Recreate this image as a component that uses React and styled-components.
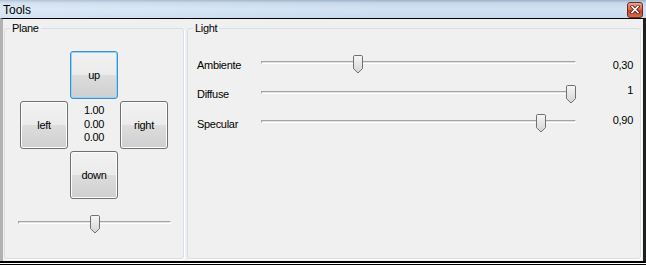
import React from "react";
import styled, { createGlobalStyle } from "styled-components";

const GlobalStyle = createGlobalStyle`
  html, body {
    margin: 0;
    padding: 0;
    overflow: hidden;
    background: #f0f0f0;
  }
  * {
    box-sizing: border-box;
  }
`;

const Window = styled.div`
  width: 646px;
  height: 265px;
  display: flex;
  flex-direction: column;
  font-family: "Liberation Sans", Arial, sans-serif;
  font-size: 11px;
  letter-spacing: -0.3px;
  color: #000;
`;

const TitleBar = styled.div`
  height: 18px;
  display: flex;
  align-items: center;
  justify-content: space-between;
  padding: 0 3px 0 3px;
  background:
    linear-gradient(90deg, rgba(255, 255, 255, 0.25), rgba(255, 255, 255, 0) 60%),
    linear-gradient(180deg, #9db0c6 0, #c6d8ec 3px, #d2e2f3 9px, #c6daef 18px);
`;

const Title = styled.span`
  font-size: 12px;
  letter-spacing: 0;
  padding-top: 1px;
`;

const CloseButton = styled.div`
  width: 16px;
  height: 16px;
  margin-top: 1px;
  border: 1px solid #6d2a1e;
  border-radius: 3px;
  background: linear-gradient(180deg, #e9a796 0%, #d66a52 45%, #c4452c 55%, #d5694c 100%);
  display: flex;
  align-items: center;
  justify-content: center;
`;

const Body = styled.div`
  flex: 1;
  display: flex;
  gap: 3px;
  padding: 2px 2px 2px 1px;
  background: #f0f0f0;
  border-top: 1px solid #000;
  border-left: 3px solid #b2b2b2;
  border-right: 3px solid #1f1f1f;
`;

const BottomEdge = styled.div`
  height: 4px;
  background: linear-gradient(180deg, #000 0 2px, #fff 2px 3px, #000 3px 4px);
`;

const Group = styled.fieldset`
  margin: 0;
  padding: 0;
  width: ${(p) => p.$width}px;
  border: 1px solid #d5dfe5;
  border-radius: 3px;
  box-shadow: 1px 1px 0 #fff;
`;

const Legend = styled.legend`
  margin-left: 5px;
  padding: 0 2px;
  line-height: 14px;
`;

const PlaneContent = styled.div`
  display: flex;
  flex-direction: column;
  align-items: center;
  padding-top: 16px;
`;

const Pad = styled.div`
  display: grid;
  grid-template-columns: repeat(3, 48px);
  grid-template-rows: repeat(3, 48px);
  gap: 2px;
  margin-bottom: 17px;
`;

const Button = styled.div`
  grid-column: ${(p) => p.$col};
  grid-row: ${(p) => p.$row};
  display: flex;
  align-items: center;
  justify-content: center;
  border: 1px solid ${(p) => (p.$focused ? "#3c8fd0" : "#707070")};
  border-radius: 3px;
  background: linear-gradient(180deg, #f2f2f2 0%, #ebebeb 50%, #dddddd 50%, #cfcfcf 100%);
  box-shadow: inset 0 0 0 1px ${(p) => (p.$focused ? "#8fd6f6" : "#fcfcfc")};
`;

const Readout = styled.div`
  grid-column: 2;
  grid-row: 2;
  display: flex;
  flex-direction: column;
  align-items: center;
  justify-content: center;
  line-height: 13.5px;
  padding-bottom: 1px;
`;

const SliderBox = styled.div`
  position: relative;
  width: ${(p) => p.$width}px;
  height: 19px;
`;

const Track = styled.div`
  position: absolute;
  left: 0;
  right: 0;
  top: 5px;
  height: 3px;
  border-top: 1px solid #a3a3a3;
  border-left: 1px solid #a3a3a3;
  border-bottom: 1px solid #fff;
  border-right: 1px solid #fff;
  background: #e2e2e2;
`;

const Thumb = styled.svg`
  position: absolute;
  top: -1px;
  width: 11px;
  height: 19px;
`;

const LightContent = styled.div`
  display: grid;
  grid-template-columns: 64px 315px 1fr;
  row-gap: 10.5px;
  align-items: center;
  padding: 21px 7px 0 9px;
`;

const Label = styled.span`
  transform: translateY(-1px);
`;

const Value = styled.span`
  text-align: right;
  transform: translateY(${(p) => (p.$shift || 0) - 1}px);
`;

const Slider = ({ width, value }) => (
  <SliderBox $width={width}>
    <Track />
    <Thumb viewBox="0 0 11 19" style={{ left: Math.round(value * (width - 10)) }}>
      <defs>
        <linearGradient id="thumbFill" x1="0" y1="0" x2="0" y2="1">
          <stop offset="0" stopColor="#f6f6f6" />
          <stop offset="1" stopColor="#d4d4d4" />
        </linearGradient>
      </defs>
      <path
        d="M1.8,0.5 H8.2 Q9.5,0.5 9.5,1.8 V13.6 L5,18 L0.5,13.6 V1.8 Q0.5,0.5 1.8,0.5 Z"
        fill="url(#thumbFill)"
        stroke="#707070"
      />
    </Thumb>
  </SliderBox>
);

const lights = [
  { name: "Ambiente", value: 0.3, text: "0,30" },
  { name: "Diffuse", value: 1, text: "1", shift: -4 },
  { name: "Specular", value: 0.9, text: "0,90", shift: -4 },
];

export default function App() {
  return (
    <>
      <GlobalStyle />
      <Window>
        <TitleBar>
          <Title>Tools</Title>
          <CloseButton>
            <svg width="10" height="9" viewBox="0 0 10 9">
              <path d="M2,1.5 L8,7.5 M8,1.5 L2,7.5" stroke="#5a1e14" strokeWidth="3.2" strokeLinecap="square" />
              <path d="M2,1.5 L8,7.5 M8,1.5 L2,7.5" stroke="#fff" strokeWidth="1.6" strokeLinecap="square" />
            </svg>
          </CloseButton>
        </TitleBar>
        <Body>
          <Group $width={180}>
            <Legend>Plane</Legend>
            <PlaneContent>
              <Pad>
                <Button $col={2} $row={1} $focused>up</Button>
                <Button $col={1} $row={2}>left</Button>
                <Readout>
                  <span>1.00</span>
                  <span>0.00</span>
                  <span>0.00</span>
                </Readout>
                <Button $col={3} $row={2}>right</Button>
                <Button $col={2} $row={3}>down</Button>
              </Pad>
              <Slider width={153} value={0.5} />
            </PlaneContent>
          </Group>
          <Group $width={454}>
            <Legend>Light</Legend>
            <LightContent>
              {lights.map((l) => (
                <React.Fragment key={l.name}>
                  <Label>{l.name}</Label>
                  <Slider width={315} value={l.value} />
                  <Value $shift={l.shift}>{l.text}</Value>
                </React.Fragment>
              ))}
            </LightContent>
          </Group>
        </Body>
        <BottomEdge />
      </Window>
    </>
  );
}
